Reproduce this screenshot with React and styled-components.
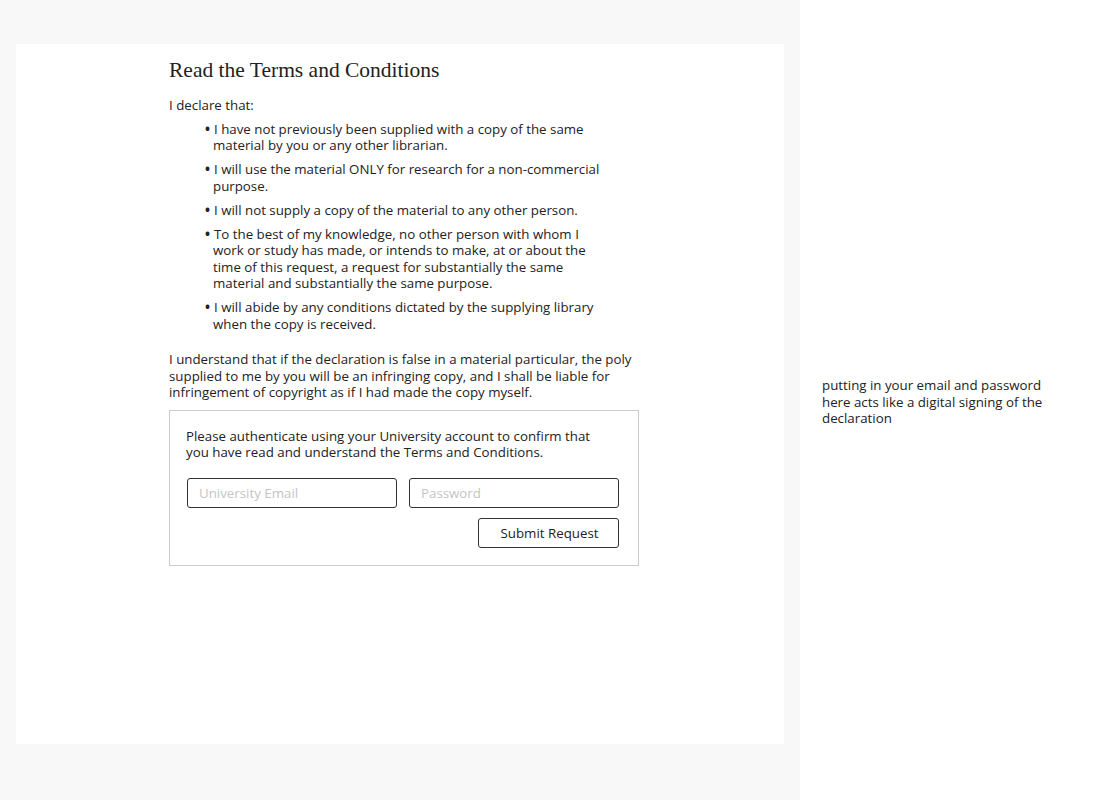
import React from "react";
import styled, { createGlobalStyle } from "styled-components";

const Global = createGlobalStyle`
  html, body { margin: 0; padding: 0; background: #fff; }
  body { font-family: "Open Sans", "Lato", sans-serif; color: #222; }
`;

const Page = styled.div`
  display: flex;
  width: 1100px;
  height: 800px;
`;

const Canvas = styled.div`
  width: 800px;
  height: 800px;
  background: #f8f8f8;
  padding: 44px 16px 56px;
  box-sizing: border-box;
`;

const Card = styled.div`
  background: #fff;
  height: 700px;
  padding: 0 0 0 153px;
  box-sizing: border-box;
`;

const Content = styled.div`
  width: 470px;
  padding-top: 13px;
`;

const Title = styled.h1`
  font-family: "Liberation Serif", "DejaVu Serif", serif;
  font-weight: normal;
  font-size: 21.5px;
  line-height: 26px;
  margin: 0 0 14px;
  color: #222;
`;

const Para = styled.p`
  font-size: 13.3px;
  line-height: 16.5px;
  margin: 0;
  max-width: ${(p) => p.$max || "none"};
`;

const List = styled.ul`
  list-style: none;
  margin: 7px 0 19px;
  padding: 0 0 0 44px;
  width: 398px;
`;

const Item = styled.li`
  font-size: 13.3px;
  line-height: 16.5px;
  text-indent: -8px;
  margin-bottom: 7.5px;
  &::before {
    content: "•";
    display: inline-block;
    width: 9px;
    font-weight: 700;
    text-indent: 0;
  }
`;

const AuthBox = styled.div`
  margin-top: 9px;
  border: 1px solid #ccc;
  padding: 17px 19px 17px 16px;
`;

const Fields = styled.div`
  display: grid;
  grid-template-columns: 1fr 1fr;
  gap: 12px;
  margin: 17px 0 10px 1px;
`;

const Input = styled.input`
  height: 30px;
  box-sizing: border-box;
  border: 1px solid #333;
  border-radius: 3px;
  padding: 0 11px;
  font-family: "Open Sans", sans-serif;
  font-size: 13.3px;
  color: #222;
  outline: none;
  &::placeholder { color: #c4c4c4; }
`;

const Actions = styled.div`
  display: flex;
  justify-content: flex-end;
`;

const Button = styled.button`
  width: 141px;
  height: 30px;
  background: #fff;
  border: 1px solid #333;
  border-radius: 3px;
  font-family: "Open Sans", sans-serif;
  font-size: 13.3px;
  color: #222;
  padding: 0 0 0 2px;
`;

const Side = styled.div`
  flex: 1;
  padding: 377px 0 0 22px;
`;

const Note = styled.p`
  margin: 0;
  width: 232px;
  font-size: 13.3px;
  line-height: 16.5px;
  color: #222;
`;

const items = [
  "I have not previously been supplied with a copy of the same material by you or any other librarian.",
  "I will use the material ONLY for research for a non-commercial purpose.",
  "I will not supply a copy of the material to any other person.",
  "To the best of my knowledge, no other person with whom I work or study has made, or intends to make, at or about the time of this request, a request for substantially the same material and substantially the same purpose.",
  "I will abide by any conditions dictated by the supplying library when the copy is received.",
];

export default function App() {
  return (
    <>
      <Global />
      <Page>
        <Canvas>
          <Card>
            <Content>
              <Title>Read the Terms and Conditions</Title>
              <Para>I declare that:</Para>
              <List>
                {items.map((t) => (
                  <Item key={t}>{t}</Item>
                ))}
              </List>
              <Para>
                I understand that if the declaration is false in a material particular, the poly
                supplied to me by you will be an infringing copy, and I shall be liable for
                infringement of copyright as if I had made the copy myself.
              </Para>
              <AuthBox>
                <Para $max="420px">
                  Please authenticate using your University account to confirm that you have read
                  and understand the Terms and Conditions.
                </Para>
                <Fields>
                  <Input type="email" placeholder="University Email" />
                  <Input type="password" placeholder="Password" />
                </Fields>
                <Actions>
                  <Button>Submit Request</Button>
                </Actions>
              </AuthBox>
            </Content>
          </Card>
        </Canvas>
        <Side>
          <Note>
            putting in your email and password here acts like a digital signing of the declaration
          </Note>
        </Side>
      </Page>
    </>
  );
}
